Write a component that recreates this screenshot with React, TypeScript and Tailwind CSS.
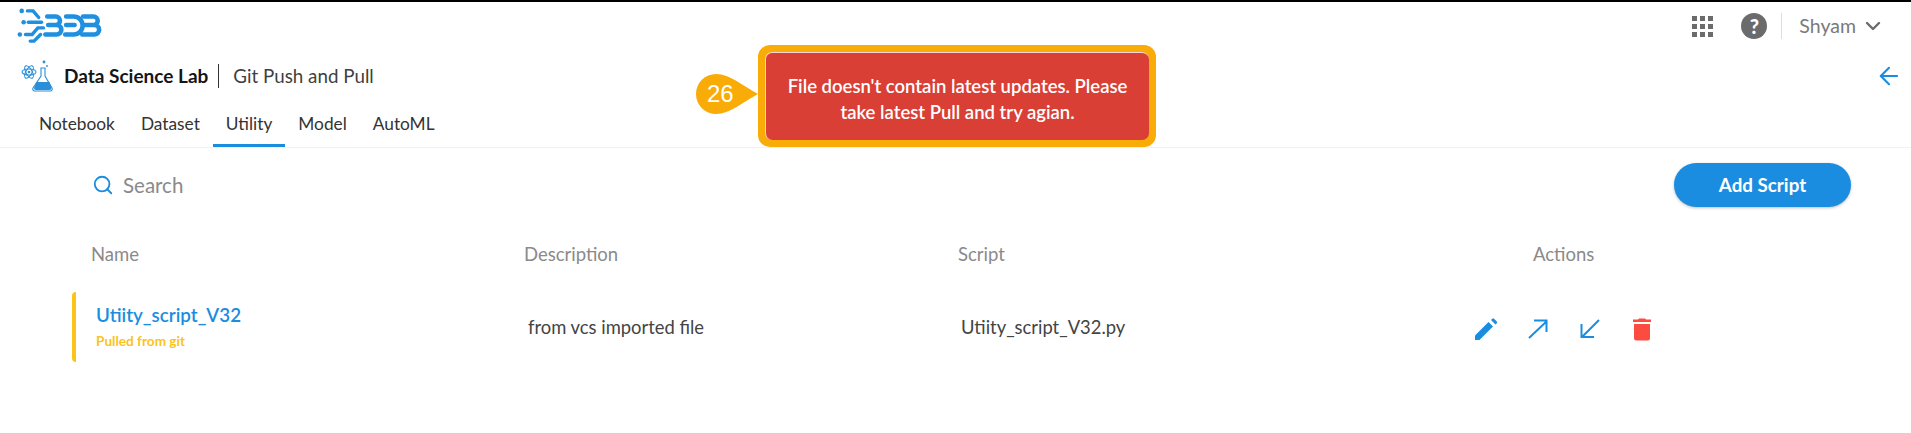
import { ArrowLeft, ChevronDown, Search } from 'lucide-react';

const font = "font-['Lato','Noto_Sans',sans-serif]";

const BdbLogo = () => (
    <svg width="85" height="38" viewBox="0 0 90 38" fill="none" stroke="#1f8fdf" strokeWidth="4.8" strokeLinecap="round">
        <circle cx="5" cy="3" r="2.4" fill="#1f8fdf" stroke="none" />
        <circle cx="7" cy="15" r="2.4" fill="#1f8fdf" stroke="none" />
        <circle cx="3" cy="28" r="2.4" fill="#1f8fdf" stroke="none" />
        <path d="M11 3h6l6 7" strokeWidth="3.6" />
        <path d="M12 15h14" strokeWidth="3.6" />
        <path d="M9 28h7l6-7h6" strokeWidth="3.6" />
        <path d="M14 35h4l7-7" strokeWidth="3.6" />
        <path d="M32 9h9a4 4 0 0 1 0 9h-8M33 18h9a5 5 0 0 1 0 10H30" />
        <path d="M52 9h8a9.500 9.500 0 0 1 0 19h-9M52 18h9" />
        <path d="M70 9h11a4 4 0 0 1 0 9h-9M72 18h10a5 5 0 0 1 0 10H69" />
    </svg>
);

const LabIcon = () => (
    <svg width="34" height="32" viewBox="0 0 34 32" fill="none" stroke="#2a8fd8" strokeWidth="1.1">
        <circle cx="23" cy="2" r="1.4" fill="#2a8fd8" stroke="none" />
        <circle cx="26" cy="6" r="0.9" fill="#2a8fd8" stroke="none" />
        <ellipse cx="8" cy="12" rx="7" ry="3" transform="rotate(60 8 12)" />
        <ellipse cx="8" cy="12" rx="7" ry="3" transform="rotate(-60 8 12)" />
        <ellipse cx="8" cy="12" rx="7" ry="3" />
        <circle cx="8" cy="12" r="1.3" fill="#2a8fd8" stroke="none" />
        <path d="M20 8h4v8l7 12a2 2 0 0 1-2 3H14a2 2 0 0 1-2-3l8-12z" />
        <path d="M15.500 22h13l2 6a2 2 0 0 1-2 2H15a2 2 0 0 1-2-2z" fill="#2a8fd8" stroke="none" />
    </svg>
);

const GridIcon = () => (
    <div className="grid grid-cols-3 gap-x-[3px] gap-y-[3px]">
        {Array.from({ length: 9 }).map((_, i) => (
            <span key={i} className="w-[5px] h-[5px] bg-[#6b6b6b]" />
        ))}
    </div>
);

const Pencil = () => (
    <svg width="24" height="24" viewBox="0 0 24 24" fill="#1a8de0">
        <path d="M0 19.500V24h4.500L18 10.500 13.500 6z" transform="translate(0 -1)" />
        <path d="M20.300 7.700a1.200 1.200 0 0 0 0-1.700l-2.800-2.800a1.200 1.200 0 0 0-1.700 0L14.500 4.500l4.500 4.500z" transform="translate(1.500 -1.500)" />
    </svg>
);

const PushArrow = () => (
    <svg width="20" height="20" viewBox="0 0 20 20" fill="none" stroke="#1a8de0" strokeWidth="2">
        <path d="M1 19 19 2M6 1.500h12.500V13" />
    </svg>
);

const PullArrow = () => (
    <svg width="20" height="20" viewBox="0 0 20 20" fill="none" stroke="#1a8de0" strokeWidth="2">
        <path d="M19 1 2 18M1.500 5v13H14" />
    </svg>
);

const Trash = () => (
    <svg width="20" height="24" viewBox="0 0 20 24" fill="#fb4c3f">
        <path d="M2 7h16v14a2.500 2.500 0 0 1-2.500 2.500h-11A2.500 2.500 0 0 1 2 21z" />
        <path d="M6 2.500 7 1.500h6l1 1h5v2.500H1V2.500z" />
    </svg>
);

const Teardrop = () => (
    <svg width="63" height="40" viewBox="0 0 63 40" fill="#f9ab07">
        <path d="M20 0C34 0 47 12 62 20 47 28 34 40 20 40A20 20 0 0 1 20 0z" />
    </svg>
);

const App = () => {
    const tabs = ['Notebook', 'Dataset', 'Utility', 'Model', 'AutoML'];

    return (
        <div className={`${font} relative w-[1911px] h-[433px] bg-white overflow-hidden`}>
            <div className="h-[2px] bg-black" />

            <div className="flex items-center justify-between h-[48px] pl-[17px] pr-[26px]">
                <BdbLogo />
                <div className="flex items-center text-[#6b6b6b]">
                    <GridIcon />
                    <span className="ml-[28px] flex items-center justify-center w-[26px] h-[26px] rounded-full bg-[#6b6b6b] text-white text-[20px] font-black leading-none">?</span>
                    <span className="ml-[14px] w-px h-[26px] bg-[#dddddd]" />
                    <span className="ml-[17px] text-[19.500px] text-[#7a7a7a]">Shyam</span>
                    <ChevronDown size={24} strokeWidth={2.4} className="ml-[5px] text-[#6b6b6b]" />
                </div>
            </div>

            <div className="flex items-center justify-between h-[52px] pl-[21px] pr-[8px]">
                <div className="flex items-center">
                    <LabIcon />
                    <span className="ml-[9px] text-[19px] font-bold text-[#151515]">Data Science Lab</span>
                    <span className="ml-[10px] w-px h-[24px] bg-[#333333]" />
                    <span className="ml-[14px] text-[18.800px] text-[#3f3f3f]">Git Push and Pull</span>
                </div>
                <ArrowLeft size={28} strokeWidth={1.8} className="text-[#1a8de0]" />
            </div>

            <div className="flex h-[46px] pl-[26px] border-b border-[#f1f1f1]">
                {tabs.map((tab) => (
                    <div
                        key={tab}
                        className={`flex items-center justify-center px-[13px] pt-[2px] text-[17.300px] text-[#333333] border-b-[3px] ${
                            tab === 'Utility' ? 'border-[#1a8de0]' : 'border-transparent'
                        }`}
                    >
                        {tab}
                    </div>
                ))}
            </div>

            <div className="flex items-center justify-between pl-[92px] pr-[60px] pt-[15px]">
                <div className="flex items-center">
                    <Search size={22} strokeWidth={2} className="text-[#1a8de0]" />
                    <span className="ml-[9px] text-[20.500px] text-[#8a8a8a]">Search</span>
                </div>
                <button type="button" className="w-[177px] h-[44px] rounded-full bg-[#1a8de0] text-white text-[18.800px] font-bold shadow-[0_1px_3px_rgba(0,0,0,0.25)]">
                    Add Script
                </button>
            </div>

            <div className="grid grid-cols-[433px_434px_575px_auto] items-start pl-[91px] mt-[34px] h-[51px] text-[18.500px] text-[#8a8a8a]">
                <span>Name</span>
                <span>Description</span>
                <span>Script</span>
                <span>Actions</span>
            </div>

            <div className="flex items-center ml-[72px] h-[70px] border-l-[4px] border-[#fbc31c] rounded-l-[4px]">
                <div className="w-[452px] pl-[20px]">
                    <div className="text-[18.800px] font-semibold text-[#1a8de0] leading-[24px]">Utiity_script_V32</div>
                    <div className="text-[13.600px] font-bold text-[#fbc31c] mt-[4px]">Pulled from git</div>
                </div>
                <span className="w-[433px] pt-[2px] text-[18.400px] text-[#444444]">from vcs imported file</span>
                <span className="w-[514px] pt-[2px] text-[18.400px] text-[#444444]">Utiity_script_V32.py</span>
                <div className="flex items-center pt-[4px]">
                    <Pencil />
                    <span className="ml-[29px]"><PushArrow /></span>
                    <span className="ml-[32px]"><PullArrow /></span>
                    <span className="ml-[32px]"><Trash /></span>
                </div>
            </div>

            {/* annotation */}
            <div className="absolute left-[696px] top-[74px] w-[63px] h-[40px]">
                <Teardrop />
                <span className="absolute left-[11px] top-0 leading-[40px] text-white text-[24px] font-['Liberation_Sans',sans-serif]">26</span>
            </div>
            <div className="absolute left-[758px] top-[45px] w-[398px] h-[102px] rounded-[12px] border-[7px] border-[#f9ab07] bg-[#f9ab07]">
                <div className="w-full h-full rounded-[7px] bg-[#da3f36] border-t border-l border-[#f6d6d2] flex items-center justify-center text-center text-white text-[18.500px] font-semibold leading-[26px] pt-[4px]">
                    <p>
                        File doesn't contain latest updates. Please
                        <br />
                        take latest Pull and try agian.
                    </p>
                </div>
            </div>
        </div>
    );
};

export default App;
